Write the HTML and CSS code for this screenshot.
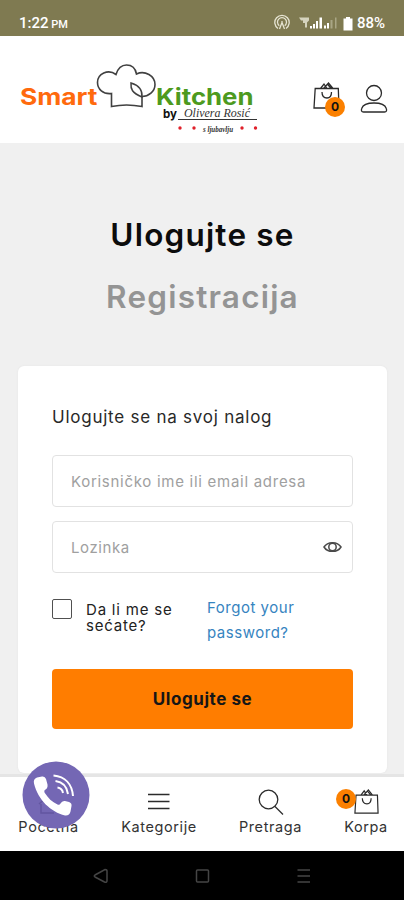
FILE: index.html
```html
<!DOCTYPE html>
<html lang="sr">
<head>
<meta charset="utf-8">
<meta name="viewport" content="width=device-width, initial-scale=1">
<title>Smart Kitchen</title>
<link rel="stylesheet" href="styles.css">
</head>
<body>
<svg class="defs" width="0" height="0" aria-hidden="true">
  <symbol id="bag" viewBox="0 0 27 28">
    <path d="M2.200 6.500H25.300L26 26H1z M7.500 6.500L11 2l3 4.500M10.500 6.500L15.500 1l4.500 5.500M14.500 2.200l3.500 4M9 10c0 4 2 6 5 6s4.500-2 4.500-6"/>
  </symbol>
</svg>
<div class="screen">
  <div class="status">
    <span class="time">1:22 <small>PM</small></span>
    <svg class="status-icons" width="68" height="18" viewBox="0 0 68 18">
      <g fill="none" stroke="#e6e4d2" stroke-width="1.300">
        <path d="M4 14.500A7.200 7.200 0 1 1 12 14.500M5.300 11.700A4.500 4.500 0 1 1 10.700 11.700"/>
        <path d="M8 8.500L5.500 15M8 8.500L10.500 15M8 7v2"/>
      </g>
      <path d="M25 3.500h10v3l-2 2v5h-2V9h-2V6.500h-2z" fill="#d5d3bd"/>
      <g fill="#fff"><path d="M36 12h2v2.500h-2zM39 10h2v4.500h-2zM42 7h2v7.500h-2zM45.500 3.500h2.500v11h-2.500zM50 11.500h2v3h-2zM53 9h2v5.500h-2z"/></g>
      <path d="M56.500 6h2v8.500h-2zM61 3.500h1.500v11H61z" fill="#a9a685"/>
    </svg>
    <svg class="battery" width="10" height="14" viewBox="0 0 10 14"><path d="M3 0h4v1.500h2.500V13.500H.5V1.500H3z" fill="#fff"/></svg>
    <span class="percent">88%</span>
  </div>

  <header class="header">
    <svg class="logo" width="245" height="75" viewBox="0 0 245 75">
      <g class="logo-name">
        <text x="0" y="45" textLength="77.500" lengthAdjust="spacingAndGlyphs" fill="#ff6a0d">Smart</text>
        <text x="136" y="45" textLength="97.500" lengthAdjust="spacingAndGlyphs" fill="#4d9a1e">Kitchen</text>
      </g>
      <path d="M91.500 46.500V33.500C83 34.500 77.500 29 77.500 22.500C77.500 14 88 8.500 96 14.500C98 8 101.500 5 106.500 5C112 5 115.500 8.500 116.500 14C125 10 135 16 135 24.500C135 31.500 128.500 36.500 122 36.500V46.500C112 44.500 101 44.500 91.500 46.500z" fill="none" stroke="#414141" stroke-width="1.600"/>
      <path d="M122 37C112 33 110.500 29 111 23C118 25 122.500 30 122 37z" fill="none" stroke="#414141" stroke-width="1.500"/>
      <text class="logo-by" x="143" y="58" textLength="14" lengthAdjust="spacingAndGlyphs">by</text>
      <text class="logo-script" x="164" y="57" textLength="66" lengthAdjust="spacingAndGlyphs">Olivera Rosić</text>
      <path d="M158 59.500H237" stroke="#333"/>
      <text class="logo-script small" x="183" y="71.500" textLength="30" lengthAdjust="spacingAndGlyphs">s ljubavlju</text>
      <g fill="#e0202a"><circle cx="160" cy="68" r="1.700"/><circle cx="174" cy="68" r="1.700"/><circle cx="222" cy="68" r="1.700"/><circle cx="235.500" cy="68" r="1.700"/></g>
    </svg>
    <div class="cart">
      <svg class="icon" width="27" height="28"><use href="#bag"/></svg>
      <span class="badge">0</span>
    </div>
    <svg class="icon user" width="28" height="30" viewBox="0 0 28 30"><circle cx="14" cy="9" r="7.500"/><path d="M3.500 28H24.500C26.500 28 27 26.500 26.300 24.500C25 20.500 21 19 14 19S3 20.500 1.700 24.500C1 26.500 1.500 28 3.500 28z"/></svg>
  </header>

  <main class="main">
    <h1 class="tab"><span class="t-login">Ulogujte se</span></h1>
    <h2 class="tab inactive"><span class="t-reg">Registracija</span></h2>
    <form class="card">
      <p class="title"><span>Ulogujte se na svoj nalog</span></p>
      <div class="field"><span class="ph-user">Korisničko ime ili email adresa</span></div>
      <div class="field">
        <span class="ph-pass">Lozinka</span>
        <svg width="19" height="12" viewBox="0 0 19 12" fill="none" stroke="#4a4a4a"><path d="M1 6C4.500 .2 14.500 .2 18 6C14.500 11.800 4.500 11.800 1 6z" stroke-width="1.500"/><circle cx="9.500" cy="6" r="3.700" stroke-width="1.500"/></svg>
      </div>
      <div class="options">
        <span class="check"></span>
        <span class="remember">Da li me se<br>sećate?</span>
        <a class="forgot">Forgot your<br>password?</a>
      </div>
      <div class="submit"><span>Ulogujte se</span></div>
    </form>
  </main>

  <nav class="nav">
    <a class="item home"><svg class="icon" width="24" height="26" viewBox="0 0 24 26"><path d="M1 13L12 3l11 10M4 11v13h6v-8h5v8h6V11"/></svg><span>Početna</span></a>
    <a class="item categories"><svg class="icon" width="22" height="26" viewBox="0 0 22 26"><path d="M0 5.500h21.500M0 12.500h21.500M0 19.500h21.500"/></svg><span>Kategorije</span></a>
    <a class="item search"><svg class="icon" width="26" height="26" viewBox="0 0 26 26"><circle cx="10.500" cy="10.500" r="9.300"/><path d="M17 17.500l8 8"/></svg><span>Pretraga</span></a>
    <a class="item basket"><svg class="icon" width="25" height="26"><use href="#bag"/></svg><span>Korpa</span><b class="badge">0</b></a>
    <div class="call">
      <svg width="68" height="68" viewBox="0 0 68 68">
        <circle cx="34" cy="34" r="33.500" fill="#7467b4"/>
        <path d="M17 43l8-7M19 43v9h13" fill="none" stroke="#6256a0" stroke-width="1.500"/>
        <path d="M15 16.500L20 15.500Q23 15 24 18L25.500 23.500Q26 27 23.500 28.500Q21.500 29.500 22.500 31.500C26 37 30 41 35.500 43.500Q37.500 44.500 38.500 42.500Q40 39.500 43 40L47 41Q50 42 49.500 45L48.500 50.500Q47.500 55 43 54.500C29 51 16 39 12 22.500Q11 18 15 16.500z" fill="#fff"/>
        <g fill="none" stroke="#fff" stroke-width="2"><path d="M31.500 14.500C43 15.500 50 23 51 35M33.500 20C41 21 45 26 46 33M35.500 26.500C39 27 40.500 29 41 32"/></g>
      </svg>
    </div>
  </nav>

  <div class="system">
    <svg width="404" height="49" viewBox="0 0 404 49" fill="none" stroke="#454545" stroke-width="1.500">
      <path d="M105 18.500Q107 18.500 107 20V29.500Q107 32 104.500 31L95 26Q93.500 25 95 24z"/>
      <rect x="196.500" y="19" width="12" height="12" rx="1"/>
      <path d="M297.500 19h12.500M297.500 25h12.500M297.500 31h12.500"/>
    </svg>
  </div>
</div>
</body>
</html>
```
FILE: styles.css
```css
* { box-sizing: border-box; }
body { margin: 0; background: #f0f0f0; font-family: Inter, "Noto Sans", sans-serif; color: #222; }
h1, h2, p { margin: 0; }
.defs { position: absolute; }
.screen { width: 404px; height: 900px; display: flex; flex-direction: column; overflow: hidden; }
.icon { fill: none; stroke: #2b2b2b; stroke-width: 1.3; }

.status { height: 36px; flex: none; background: #7f7a51; color: #fff; display: flex; padding: 13px 17px 0 19px; font: 500 15px/21px Roboto, sans-serif; }
.time { flex: 1; }
.time small { font-size: 11px; margin-left: -1px; }
.status-icons { margin: 1px 1px 0 0; }
.battery { margin: 4px 4px 0 0; }
.percent { width: 30px; }

.header { height: 107px; flex: none; background: #fff; display: flex; padding: 24px 16px 0 20px; }
.logo { flex: none; }
.logo-name { font: 700 23px Inter, sans-serif; }
.logo-by { font: 700 12px Inter, sans-serif; fill: #111; }
.logo-script { font: italic 12px "Liberation Serif", serif; fill: #333; }
.logo-script.small { font-size: 8px; font-weight: 700; }
.cart { position: relative; margin: 22px 0 0 48px; width: 27px; height: 28px; }
.cart .badge { position: absolute; left: 12px; top: 15px; }
.badge { width: 20px; height: 20px; border-radius: 50%; background: #fb8000; color: #111; font-size: 12px; line-height: 20px; text-align: center; font-weight: 700; }
.user { margin: 24px 0 0 auto; }

.main { flex: 1; min-height: 0; padding: 60px 17px 0 18px; background: #f0f0f0; }
.tab { height: 62px; text-align: center; font-size: 31.5px; line-height: 63px; font-weight: 600; color: #0c0c0c; }
.inactive { color: #949494; }
.t-login { letter-spacing: 1.2px; }
.t-reg { letter-spacing: 1.2px; }
.card { height: 407px; margin-top: 39px; padding: 37px 34px 0; background: #fff; border-radius: 6px; box-shadow: 0 0 2px #e2e2e2; }
.title { height: 52px; font-size: 17px; line-height: 28px; white-space: nowrap; letter-spacing: .76px; color: #292929; }
.field { height: 52px; border: 1.5px solid #e2e2e2; border-radius: 4px; margin-bottom: 14px; padding: 0 10px 0 18px; display: flex; align-items: center; justify-content: space-between; font-size: 15px; color: #a0a0a0; white-space: nowrap; }
.ph-user { letter-spacing: .72px; }
.ph-pass { letter-spacing: .6px; }
.options { display: flex; height: 70px; margin-top: 26px; }
.check { width: 20px; height: 20px; border: 1.5px solid #505050; border-radius: 2px; }
.remember { margin: 3px 0 0 14px; width: 121px; font-size: 15px; line-height: 16px; letter-spacing: .8px; }
.forgot { margin-top: -4px; font-size: 15px; line-height: 25px; letter-spacing: .52px; color: #3684bf; }
.submit { height: 60px; background: #ff7d00; border-radius: 4px; text-align: center; font-size: 17px; line-height: 60px; font-weight: 700; letter-spacing: .55px; color: #161616; }

.nav { position: relative; height: 77px; flex: none; background: #fff; border-top: 3px solid #e5e5e5; display: flex; justify-content: space-between; padding: 12px 16px 0 18px; }
.item { display: flex; flex-direction: column; align-items: center; font-size: 14.5px; line-height: 24px; letter-spacing: .6px; color: #333; position: relative; }
.home { width: 61px; }
.categories { width: 76px; }
.search { width: 63px; }
.basket { width: 44px; }
.basket .badge { position: absolute; left: -8px; top: 0; letter-spacing: 0; }
.call { position: absolute; left: 22px; top: -16px; width: 68px; height: 68px; }
.system { height: 49px; flex: none; background: #000; }
```
